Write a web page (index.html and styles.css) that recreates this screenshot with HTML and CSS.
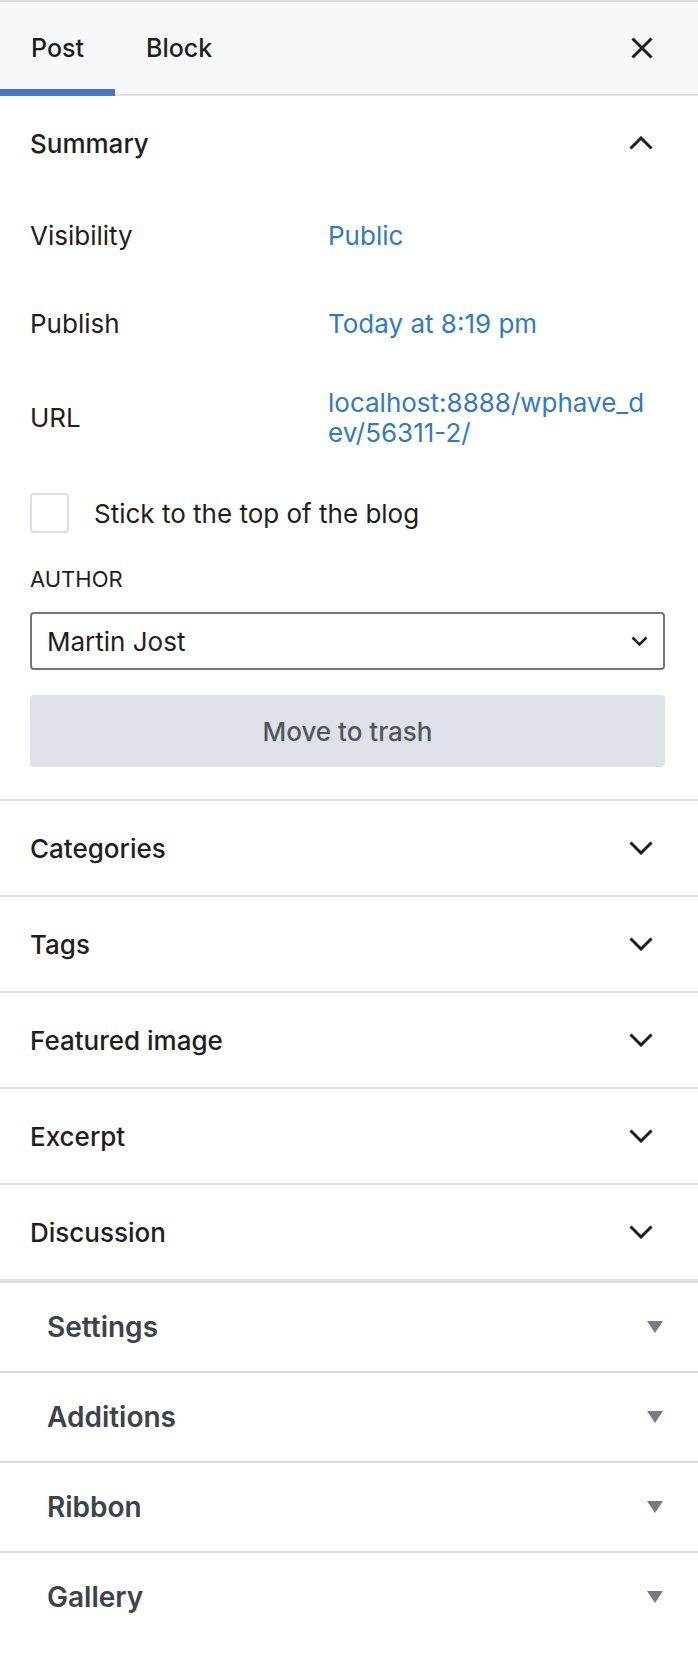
FILE: index.html
```html
<!DOCTYPE html>
<html lang="en">
<head>
    <meta charset="UTF-8">
    <meta name="viewport" content="width=device-width, initial-scale=1.0">
    <title>Post settings</title>
    <link rel="stylesheet" href="styles.css">
</head>
<body>
    <div class="sidebar">
        <div class="tabs">
            <button class="tab active">Post</button>
            <button class="tab">Block</button>
            <button class="close" aria-label="Close">
                <svg width="22" height="22" viewBox="0 0 22 22"><path d="M1.5 1.5l19 19M20.5 1.5l-19 19" stroke="#1e1e1e" stroke-width="3" fill="none"/></svg>
            </button>
        </div>

        <section class="panel">
            <h2 class="panel-title">
                <span>Summary</span>
                <svg class="chevron" width="24" height="14" viewBox="0 0 24 14"><path d="M1.5 12.5L12 2l10.5 10.5" stroke="#1e1e1e" stroke-width="3" fill="none"/></svg>
            </h2>
            <div class="panel-body">
                <div class="row">
                    <span class="label">Visibility</span>
                    <a class="value">Public</a>
                </div>
                <div class="row">
                    <span class="label">Publish</span>
                    <a class="value">Today at 8:19 pm</a>
                </div>
                <div class="row">
                    <span class="label">URL</span>
                    <a class="value url">localhost:8888/wphave_dev/56311-2/</a>
                </div>

                <label class="check">
                    <span class="box"></span>
                    Stick to the top of the blog
                </label>

                <div class="field-label">AUTHOR</div>
                <div class="select">
                    <span>Martin Jost</span>
                    <svg width="17" height="10" viewBox="0 0 17 10"><path d="M1.5 1.5l7 7 7-7" stroke="#1e1e1e" stroke-width="2.5" fill="none"/></svg>
                </div>

                <button class="trash">Move to trash</button>
            </div>
        </section>

        <section class="panel">
            <h2 class="panel-title"><span>Categories</span><svg class="chevron" width="24" height="14" viewBox="0 0 24 14"><path d="M1.5 1.5L12 12l10.5-10.5" stroke="#1e1e1e" stroke-width="3" fill="none"/></svg></h2>
        </section>
        <section class="panel">
            <h2 class="panel-title"><span>Tags</span><svg class="chevron" width="24" height="14" viewBox="0 0 24 14"><path d="M1.5 1.5L12 12l10.5-10.5" stroke="#1e1e1e" stroke-width="3" fill="none"/></svg></h2>
        </section>
        <section class="panel">
            <h2 class="panel-title"><span>Featured image</span><svg class="chevron" width="24" height="14" viewBox="0 0 24 14"><path d="M1.5 1.5L12 12l10.5-10.5" stroke="#1e1e1e" stroke-width="3" fill="none"/></svg></h2>
        </section>
        <section class="panel">
            <h2 class="panel-title"><span>Excerpt</span><svg class="chevron" width="24" height="14" viewBox="0 0 24 14"><path d="M1.5 1.5L12 12l10.5-10.5" stroke="#1e1e1e" stroke-width="3" fill="none"/></svg></h2>
        </section>
        <section class="panel">
            <h2 class="panel-title"><span>Discussion</span><svg class="chevron" width="24" height="14" viewBox="0 0 24 14"><path d="M1.5 1.5L12 12l10.5-10.5" stroke="#1e1e1e" stroke-width="3" fill="none"/></svg></h2>
        </section>

        <div class="metaboxes">
            <div class="metabox"><h3>Settings</h3><span class="arrow"></span></div>
            <div class="metabox"><h3>Additions</h3><span class="arrow"></span></div>
            <div class="metabox"><h3>Ribbon</h3><span class="arrow"></span></div>
            <div class="metabox last"><h3>Gallery</h3><span class="arrow"></span></div>
        </div>
    </div>
</body>
</html>
```

FILE: styles.css
```css
body {
    margin: 0;
    font-family: Inter, "Noto Sans", sans-serif;
    font-size: 26px;
    color: #1e1e1e;
    background-color: #fff;
}

button {
    font-family: inherit;
    font-size: inherit;
    border: none;
    background: none;
    padding: 0;
    color: inherit;
}

/* tabs header */
.tabs {
    display: flex;
    align-items: stretch;
    height: 92px;
    background-color: #f7f8fa;
    border-top: 2px solid #dcdcde;
    border-bottom: 2px solid #e0e0e0;
}

.tab {
    position: relative;
    padding: 0 31px;
    font-size: 25px;
    font-weight: 500;
    color: #1e1e1e;
}

.tab.active::after {
    content: "";
    position: absolute;
    left: 0;
    right: 0;
    bottom: -2px;
    height: 7px;
    background-color: #4f74c4;
}

.close {
    margin-left: auto;
    margin-right: 8px;
    width: 96px;
    display: flex;
    align-items: center;
    justify-content: center;
}

/* panels */
.panel {
    border-bottom: 2px solid #e0e0e0;
}

.panel-title {
    margin: 0;
    height: 94px;
    padding: 0 45px 0 30px;
    display: flex;
    align-items: center;
    justify-content: space-between;
    font-size: 26px;
    font-weight: 500;
}

.panel-body {
    padding: 10px 33px 32px 30px;
    display: flex;
    flex-direction: column;
}

.row {
    display: grid;
    grid-template-columns: 298px 1fr;
    align-items: center;
    min-height: 72px;
    padding: 12px 0;
    box-sizing: border-box;
    margin-bottom: 16px;
    line-height: 30px;
}

.value {
    color: #3479bd;
    cursor: pointer;
}

.url {
    max-width: 322px;
    word-break: break-all;
}

.check {
    display: flex;
    align-items: center;
    gap: 25px;
    margin-top: 17px;
    height: 40px;
}

.box {
    width: 35px;
    height: 36px;
    border: 2px solid #dcdfe6;
    border-radius: 4px;
    background-color: #fff;
}

.field-label {
    margin-top: 32px;
    font-size: 22px;
    line-height: 28px;
    text-transform: uppercase;
}

.select {
    margin-top: 19px;
    height: 58px;
    box-sizing: border-box;
    border: 2px solid #757575;
    border-radius: 4px;
    display: flex;
    align-items: center;
    justify-content: space-between;
    padding: 0 15px;
}

.trash {
    margin-top: 25px;
    height: 72px;
    border-radius: 4px;
    background-color: #dfe1e8;
    color: #50575e;
    font-weight: 500;
}

/* meta boxes */
.metaboxes {
    border-top: 2px solid #dcdcde;
}

.metabox {
    height: 88px;
    border-bottom: 2px solid #dcdcde;
    display: flex;
    align-items: center;
    justify-content: space-between;
    padding: 0 35px 0 47px;
}

.metabox.last {
    border-bottom: none;
}

.metabox h3 {
    margin: 0;
    font-size: 28px;
    font-weight: 600;
    color: #3c434a;
}

.arrow {
    width: 0;
    height: 0;
    border-left: 8px solid transparent;
    border-right: 8px solid transparent;
    border-top: 12px solid #787c82;
}
```
